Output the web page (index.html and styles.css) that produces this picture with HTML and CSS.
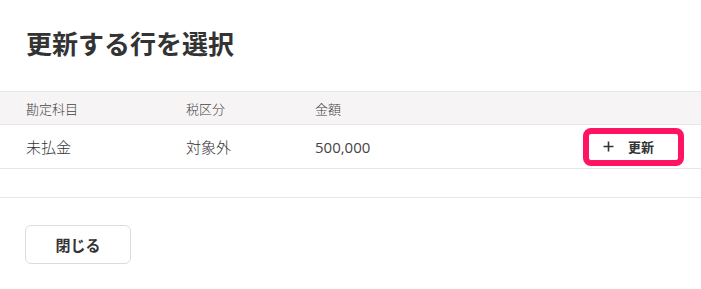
FILE: index.html
```html
<!DOCTYPE html>
<html lang="ja">
<head>
<meta charset="utf-8">
<link rel="stylesheet" href="styles.css">
</head>
<body>
<div class="dialog">
  <h1 class="title">更新する行を選択</h1>
  <div class="table">
    <div class="row head">
      <div class="cell">勘定科目</div>
      <div class="cell">税区分</div>
      <div class="cell">金額</div>
      <div class="cell"></div>
    </div>
    <div class="row body">
      <div class="cell">未払金</div>
      <div class="cell">対象外</div>
      <div class="cell amount">500,000</div>
      <div class="cell action">
        <button class="update-btn" type="button">
          <svg class="plus" width="11" height="11" viewBox="0 0 11 11" aria-hidden="true"><path d="M5.5 0.5v10M0.5 5.5h10" stroke="#333" stroke-width="1.6" fill="none"/></svg>
          <span>更新</span>
        </button>
      </div>
    </div>
  </div>
  <div class="footer">
    <button class="close-btn" type="button">閉じる</button>
  </div>
</div>
</body>
</html>
```
FILE: styles.css
```css
html, body {
  margin: 0;
  padding: 0;
  background: #fff;
}
body {
  font-family: "Open Sans", "Noto Sans CJK JP", sans-serif;
  color: #333;
}
.dialog {
  display: flex;
  flex-direction: column;
}
.title {
  margin: 0;
  padding: 24px 26px 0;
  font-family: "Noto Sans CJK JP", sans-serif;
  font-size: 26px;
  line-height: 38px;
  font-weight: 700;
  color: #333;
  margin-bottom: 29px;
}
.table {
  display: flex;
  flex-direction: column;
  border-top: 1px solid #e6e6e6;
}
.row {
  display: grid;
  grid-template-columns: 160px 129px 1fr auto;
  align-items: center;
  padding: 0 17px 0 26px;
  border-bottom: 1px solid #e6e6e6;
}
.head {
  height: 32px;
  background: #f6f4f5;
  font-size: 13px;
  font-weight: 300;
  color: #444;
}
.body {
  height: 43px;
  font-size: 15px;
  font-weight: 300;
  color: #333;
}
.amount {
  font-weight: 400;
  color: #444;
}
.action {
  display: flex;
  justify-content: flex-end;
}
.update-btn {
  display: flex;
  align-items: center;
  gap: 14px;
  box-sizing: border-box;
  width: 101px;
  height: 38px;
  padding: 0 0 0 14px;
  border: 6px solid #fe1463;
  border-radius: 8px;
  background: #fff;
  font-family: "Noto Sans CJK JP", sans-serif;
  font-size: 13px;
  font-weight: 700;
  color: #333;
  cursor: pointer;
}
.plus {
  display: block;
}
.footer {
  margin-top: 28px;
  border-top: 1px solid #e6e6e6;
  padding: 27px 25px;
}
.close-btn {
  box-sizing: border-box;
  width: 106px;
  height: 39px;
  border: 1px solid #dcdcdc;
  border-radius: 6px;
  background: #fff;
  font-family: "Noto Sans CJK JP", sans-serif;
  font-size: 15px;
  font-weight: 700;
  color: #333;
}
```
